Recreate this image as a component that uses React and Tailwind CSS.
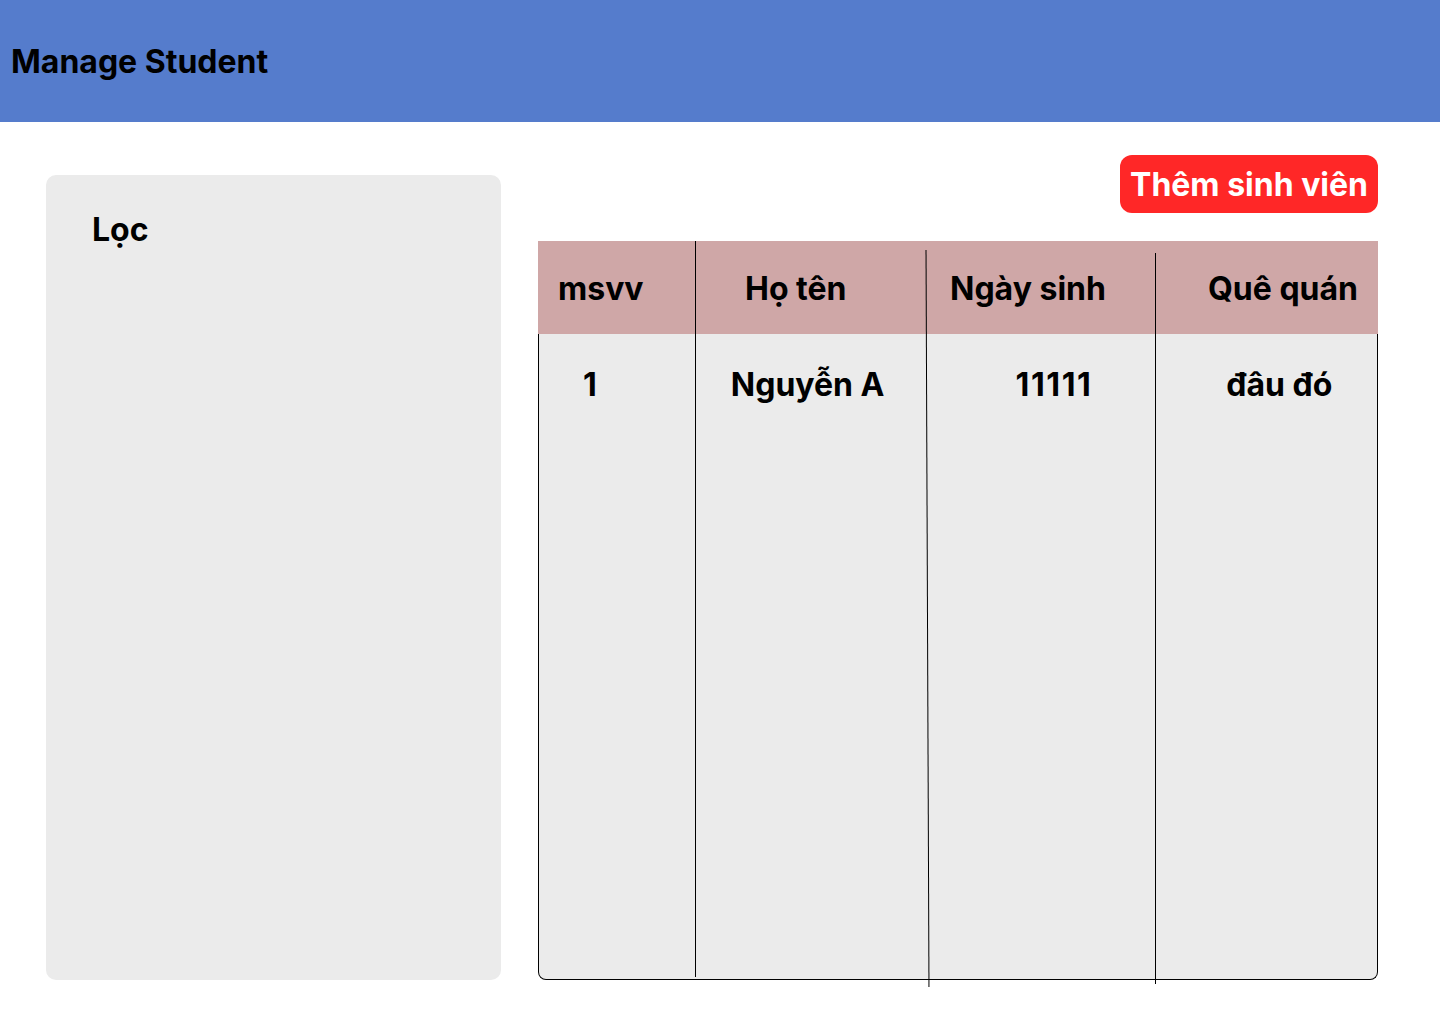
export default function App() {
  return (
    <div className="min-h-screen bg-white font-['Inter',sans-serif] text-black">
      <header className="h-[122px] bg-[#557CCC] flex items-center pl-[11px]">
        <h1 className="text-[32px] font-bold leading-[39px]">Manage Student</h1>
      </header>
      <main className="flex items-start pl-[46px]">
        <aside className="mt-[53px] w-[455px] h-[805px] rounded-[10px] bg-[#EBEBEB] pl-[46px] pt-[35px]">
          <h2 className="text-[32px] font-bold leading-[39px]">Lọc</h2>
        </aside>
        <section className="ml-[37px] w-[840px] mt-[33px]">
          <div className="flex justify-end">
            <button className="h-[58px] px-[10px] rounded-[12px] bg-[#FF2727] text-white text-[32px] font-bold leading-[39px]">
              Thêm sinh viên
            </button>
          </div>
          <div className="relative mt-[28px] text-[32px] font-bold leading-[39px]">
            <div className="flex h-[93px] bg-[#CFA7A7] items-center pt-px">
              <div className="w-[157px] pl-[20px]">msvv</div>
              <div className="w-[232px] pl-[50px]">Họ tên</div>
              <div className="w-[228px] pl-[23px]">Ngày sinh</div>
              <div className="w-[223px] pl-[53px]">Quê quán</div>
            </div>
            <div className="h-[646px] bg-[#EBEBEB] border border-t-0 border-black rounded-b-[8px]">
              <div className="flex h-[100px] items-center -ml-px">
                <div className="w-[157px] pl-[45px]">1</div>
                <div className="w-[232px] pl-[36px]">Nguyễn A</div>
                <div className="w-[228px] pl-[89px] tracking-[1.6px]">11111</div>
                <div className="w-[223px] pl-[72px]">đâu đó</div>
              </div>
            </div>
            <div className="absolute left-[157px] top-0 h-[736px] w-px bg-black" />
            <div className="absolute left-[389px] top-[9px] h-[737px] w-px bg-black rotate-[-0.23deg]" />
            <div className="absolute left-[617px] top-[12px] h-[731px] w-px bg-black" />
          </div>
        </section>
      </main>
    </div>
  );
}
